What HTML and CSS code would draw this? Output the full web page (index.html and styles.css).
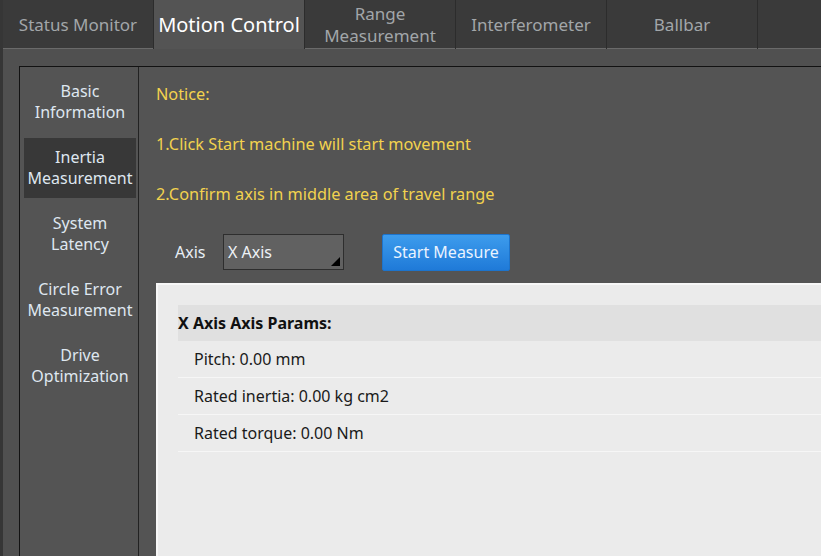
FILE: index.html
```html
<!DOCTYPE html>
<html>
<head>
<meta charset="utf-8">
<link rel="stylesheet" href="styles.css">
</head>
<body>
<div class="app">
  <div class="tabs">
    <div class="tab">Status Monitor</div>
    <div class="tab active">Motion Control</div>
    <div class="tab two">Range<br>Measurement</div>
    <div class="tab">Interferometer</div>
    <div class="tab">Ballbar</div>
    <div class="tab-rest"></div>
  </div>
  <div class="content">
    <div class="frame">
      <div class="sidebar">
        <div class="nav">Basic<br>Information</div>
        <div class="nav selected">Inertia<br>Measurement</div>
        <div class="nav">System<br>Latency</div>
        <div class="nav">Circle Error<br>Measurement</div>
        <div class="nav">Drive<br>Optimization</div>
      </div>
      <div class="main">
        <div class="notice">Notice:</div>
        <div class="notice">1.Click Start machine will start movement</div>
        <div class="notice">2.Confirm axis in middle area of travel range</div>
        <div class="axis-row">
          <span class="axis-label">Axis</span>
          <div class="select">X Axis<span class="corner"></span></div>
          <button class="btn">Start Measure</button>
        </div>
        <div class="panel">
          <div class="phead">X Axis Axis Params:</div>
          <div class="prow">Pitch: 0.00 mm</div>
          <div class="prow">Rated inertia: 0.00 kg cm2</div>
          <div class="prow">Rated torque: 0.00 Nm</div>
        </div>
      </div>
    </div>
  </div>
</div>
</body>
</html>
```
FILE: styles.css
```css
html, body {
  margin: 0;
  padding: 0;
}
body {
  width: 821px;
  height: 556px;
  overflow: hidden;
  background: #505050;
  font-family: "Noto Sans", "Open Sans", sans-serif;
}
.app {
  width: 821px;
  height: 556px;
  border-left: 3px solid #363636;
  box-sizing: border-box;
  display: flex;
  flex-direction: column;
  overflow: hidden;
}
.tabs {
  display: flex;
  height: 49px;
  flex: none;
  background: #2c2c2c;
}
.tab {
  width: 150px;
  flex: none;
  margin-right: 1px;
  background: #3a3a3a;
  color: #a2a6a9;
  font-size: 17px;
  display: flex;
  align-items: center;
  justify-content: center;
  text-align: center;
  line-height: 22px;
  border-bottom: 1px solid #6a6a6a;
  box-sizing: border-box;
  padding-top: 2px;
}
.tab.active {
  background: #545454;
  color: #ffffff;
  font-size: 20px;
  border-bottom: none;
  padding-top: 0;
}
.tab-rest {
  flex: 1;
  background: #3a3a3a;
  border-bottom: 1px solid #6a6a6a;
}
.content {
  flex: 1;
  padding: 17px 0 0 16px;
  background: #505050;
}
.frame {
  border-top: 1px solid #121212;
  border-left: 1px solid #121212;
  background: #545454;
  height: 100%;
  display: flex;
}
.sidebar {
  width: 119px;
  flex: none;
  border-right: 1px solid #222222;
  padding: 5px 2px 0 4px;
  box-sizing: border-box;
  display: flex;
  flex-direction: column;
  gap: 6px;
}
.nav {
  height: 60px;
  display: flex;
  align-items: center;
  justify-content: center;
  text-align: center;
  color: #dfe7f0;
  font-size: 16px;
  line-height: 21px;
}
.nav.selected {
  background: #383838;
}
.main {
  flex: 1;
  padding: 17px 0 0 17px;
  display: flex;
  flex-direction: column;
  min-width: 0;
}
.notice {
  color: #f2d24e;
  font-size: 16.3px;
  line-height: 20px;
  height: 20px;
  margin-bottom: 30px;
  white-space: nowrap;
}
.axis-row {
  display: flex;
  align-items: center;
  height: 36px;
}
.axis-label {
  color: #e8eef5;
  font-size: 16px;
  margin-left: 19px;
  width: 48px;
}
.select {
  position: relative;
  width: 121px;
  height: 36px;
  box-sizing: border-box;
  border: 1px solid #2e2e2e;
  background: #616161;
  color: #eef2f6;
  font-size: 16px;
  line-height: 34px;
  padding-left: 4px;
}
.corner {
  position: absolute;
  right: 3px;
  bottom: 3px;
  width: 0;
  height: 0;
  border-left: 9px solid transparent;
  border-bottom: 9px solid #000;
}
.btn {
  margin-left: 38px;
  width: 128px;
  height: 37px;
  border: 1px solid #1d74cc;
  border-radius: 2px;
  background: linear-gradient(#3d9ced, #1f7ad8);
  color: #eaf3ff;
  font-family: inherit;
  font-size: 16px;
  padding: 0;
}
.panel {
  margin-top: 13px;
  flex: 1;
  background: #ebebeb;
  border-top: 2px solid #f7f7f7;
  border-left: 2px solid #f7f7f7;
  padding: 20px 0 0 20px;
}
.phead {
  height: 36px;
  background: #e0e0e0;
  font-weight: bold;
  color: #111;
  font-size: 16px;
  line-height: 36px;
}
.prow {
  height: 37px;
  box-sizing: border-box;
  border-bottom: 1px solid #f6f6f6;
  color: #1a1a1a;
  font-size: 16px;
  line-height: 37px;
  padding-left: 16px;
}
```
